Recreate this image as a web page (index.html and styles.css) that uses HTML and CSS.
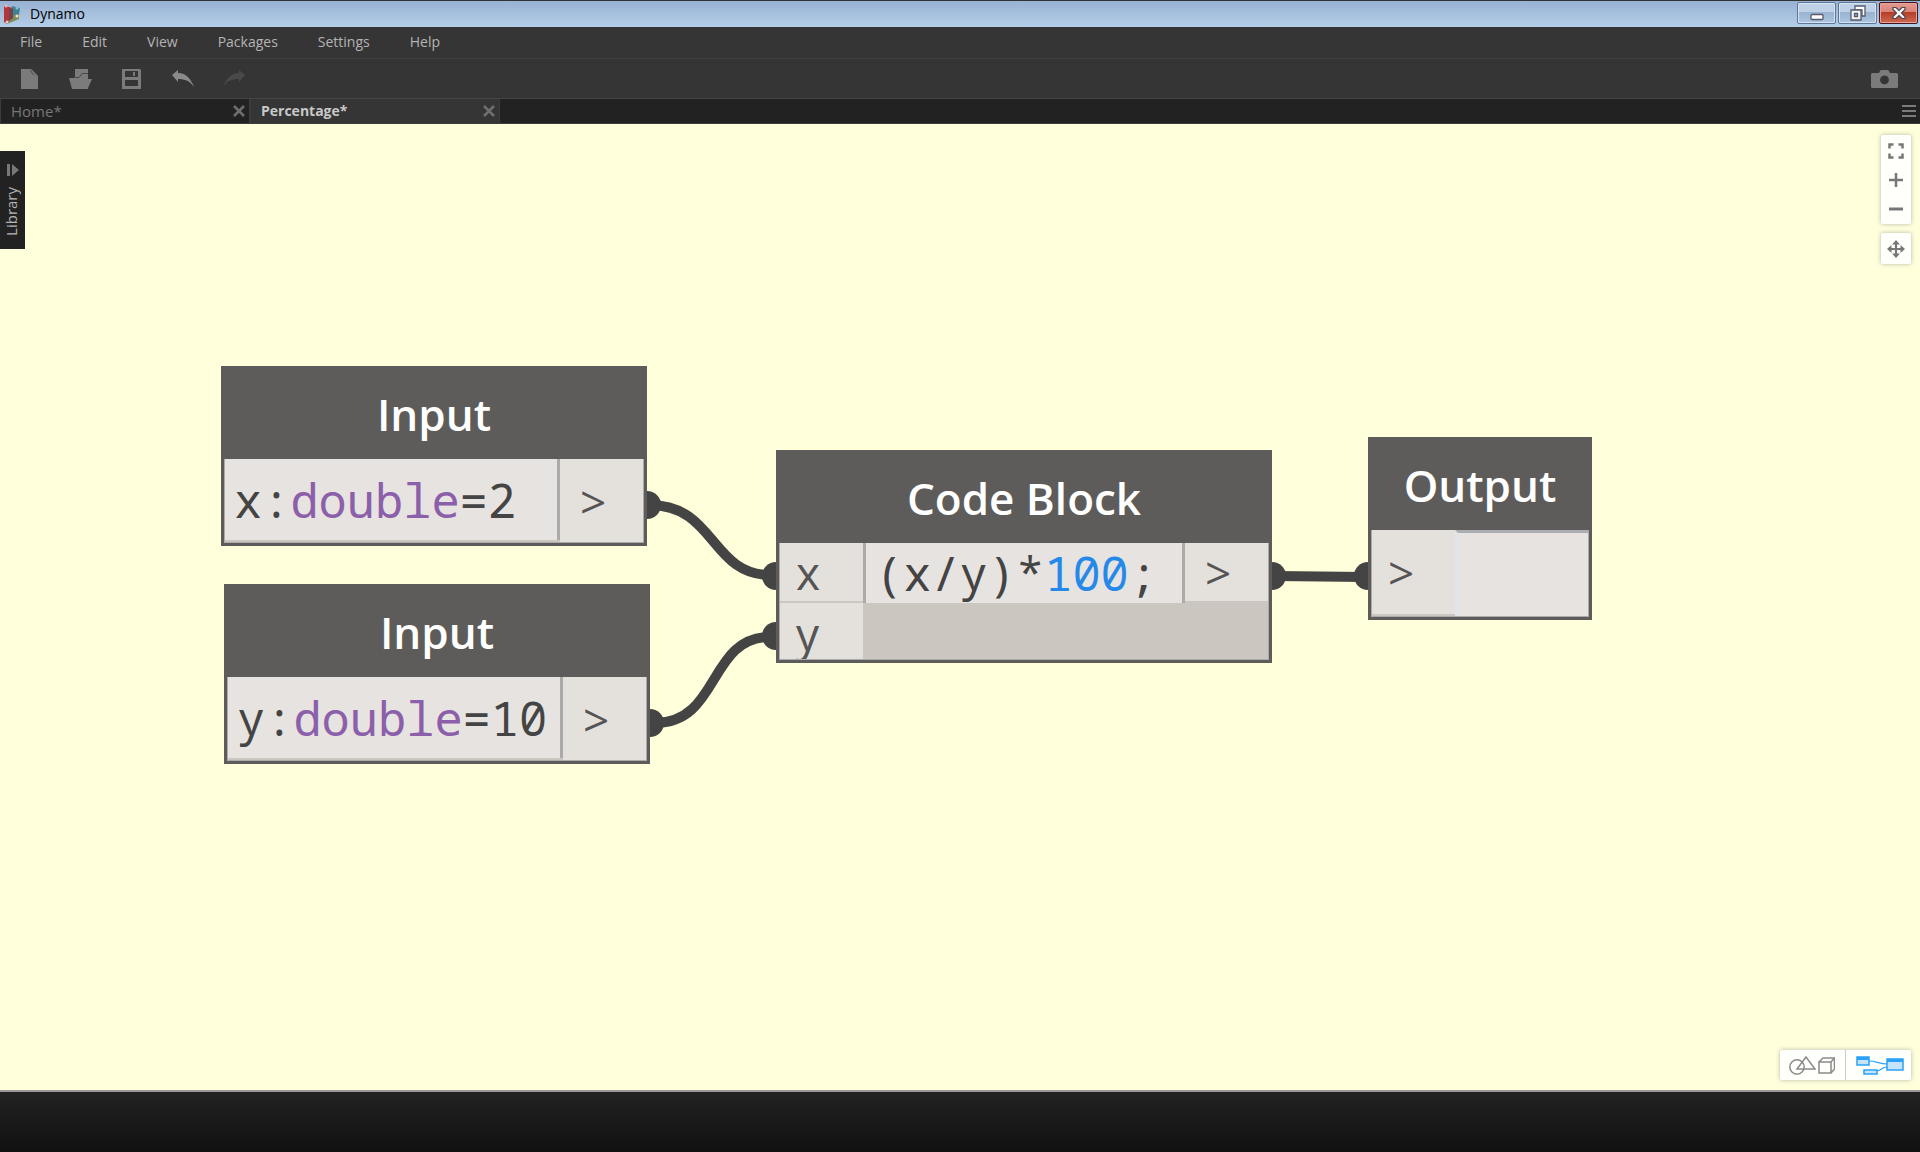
FILE: index.html
```html
<!DOCTYPE html>
<html lang="en">
<head>
<meta charset="utf-8">
<title>Dynamo</title>
<meta name="viewport" content="width=device-width, initial-scale=1">
<link rel="stylesheet" href="styles.css">
</head>
<body>
<header class="titlebar">
  <svg class="app-icon" width="18" height="20" viewBox="0 0 18 20" aria-hidden="true">
    <path d="M1 2l10 2v9l-7 7-3-2z" fill="#b5353c"/>
    <path d="M9 2l8 2-1 7-6 2z" fill="#3f8295"/>
    <path d="M8 12l8-2v5l-12 5z" fill="#7d8c59"/>
    <path d="M6 4l4 1v9l-4 3z" fill="#74424a"/>
    <circle cx="3" cy="2" r="1.500" fill="#e3b3b5"/><circle cx="14" cy="4" r="1.500" fill="#7fc4d8"/><circle cx="14" cy="12" r="1.500" fill="#eee6c4"/><circle cx="4" cy="18" r="1.500" fill="#e8c9cc"/>
  </svg>
  <span class="app-name">Dynamo</span>
  <div class="window-buttons">
    <button class="win-btn" aria-label="Minimize"><svg width="14" height="16" viewBox="0 0 14 16"><rect x="1" y="9.500" width="12" height="5" rx="1" fill="#fff" stroke="#565a6c" stroke-width="1.300"/></svg></button>
    <button class="win-btn" aria-label="Restore"><svg width="16" height="16" viewBox="0 0 16 16"><path d="M5 1h10v10h-3v-6h-7z" fill="#fff" stroke="#565a6c" stroke-width="1.300"/><path fill-rule="evenodd" d="M1 5h10v10H1zM4.500 8.500v3h3v-3z" fill="#f4f4f4" stroke="#565a6c" stroke-width="1.300"/></svg></button>
    <button class="win-btn win-close" aria-label="Close"><svg width="16" height="14" viewBox="0 0 16 14"><path d="M2 1.500h3l3 3 3-3h3v2L10.500 7l3.500 3.500v2h-3l-3-3-3 3H2v-2L5.500 7 2 3.500z" fill="#f6f6f6" stroke="#4c4454" stroke-width="1.200"/></svg></button>
  </div>
</header>

<nav class="menubar" aria-label="Main menu">
  <button>File</button><button>Edit</button><button>View</button><button>Packages</button><button>Settings</button><button>Help</button>
</nav>

<div class="toolbar">
  <button class="tool" aria-label="New"><svg width="18" height="20" viewBox="0 0 18 20"><path d="M0 0h10l7 7v13H0z" fill="#7b7b7b"/><path d="M8 0l9 8c-2-2-4-2.500-5-2z" fill="#4a4a4a"/><path d="M10 0l7 7-5-2z" fill="#7b7b7b"/></svg></button>
  <button class="tool" aria-label="Open"><svg width="24" height="20" viewBox="0 0 24 20"><path d="M6 0h13v9H6z" fill="#7b7b7b"/><path d="M0 9h9l3-4h7v15H3z" fill="#7b7b7b"/><path d="M5 8.500h5l3-4h6" fill="none" stroke="#4a4a4a"/><path d="M18 10h5l-4 9z" fill="#7b7b7b"/></svg></button>
  <button class="tool" aria-label="Save"><svg width="20" height="20" viewBox="0 0 20 20"><path fill-rule="evenodd" d="M0 0h18l1 1v19H0zM3 2v6h13V2zM3 11v6h13v-6z" fill="#7b7b7b"/><path d="M12 3v4" stroke="#7b7b7b" stroke-width="2"/></svg></button>
  <button class="tool" aria-label="Undo"><svg width="22" height="18" viewBox="0 0 22 18"><path d="M6 0v3c8 0 13 6 16 14-4-6-9-8-16-8v3L0 5z" fill="#8a8a8a"/></svg></button>
  <button class="tool" aria-label="Redo" disabled><svg width="22" height="18" viewBox="0 0 22 18"><path d="M16 0v3C8 3 3 9 0 17c4-6 9-8 16-8v3l6-7z" fill="#494949"/></svg></button>
  <button class="tool tool-camera" aria-label="Export image"><svg width="27" height="18" viewBox="0 0 27 18"><path fill-rule="evenodd" d="M1.500 3H8l1-2q.5-1 1.500-1h6q1 0 1.500 1l1 2h6.500q1.500 0 1.500 1.500v12q0 1.500-1.500 1.500h-24Q0 18 0 16.500v-12Q0 3 1.500 3zM13.500 5.500a4.400 4.400 0 1 0 .01 0z" fill="#7b7b7b"/></svg></button>
</div>

<div class="tabs">
  <div class="tab"><a href="#home">Home*</a><button class="tab-close" aria-label="Close Home"><svg width="12" height="12" viewBox="0 0 12 12"><path d="M1 1l10 10M11 1L1 11" stroke="#6e6e6e" stroke-width="2.500"/></svg></button></div>
  <div class="tab active"><a href="#percentage">Percentage*</a><button class="tab-close" aria-label="Close Percentage"><svg width="12" height="12" viewBox="0 0 12 12"><path d="M1 1l10 10M11 1L1 11" stroke="#6e6e6e" stroke-width="2.500"/></svg></button></div>
  <button class="tab-menu" aria-label="Tab list"><svg width="14" height="14" viewBox="0 0 14 14"><path d="M0 2h14M0 7h14M0 12h14" stroke="#7b7b7b" stroke-width="2"/></svg></button>
</div>

<main class="workspace">
  <svg class="wires" aria-hidden="true">
    <g fill="none" stroke="#444" stroke-width="10">
      <path d="M650 381C715 381 711 451 770 451"/>
      <path d="M655 599C720 599 708 513 770 513"/>
      <path d="M1275 452L1365 453"/>
    </g>
    <g fill="#444">
      <circle cx="647" cy="381" r="14"/><circle cx="650" cy="599" r="14"/>
      <circle cx="776" cy="452" r="14"/><circle cx="776" cy="512" r="14"/>
      <circle cx="1272" cy="452" r="14"/><circle cx="1368" cy="452" r="14"/>
    </g>
  </svg>

  <section class="node node-input-x">
    <h2>Input</h2>
    <div class="node-body">
      <code class="code">x:<span class="type">double</span>=2</code>
      <div class="port port-out">&gt;</div>
    </div>
  </section>
  <section class="node node-input-y">
    <h2>Input</h2>
    <div class="node-body">
      <code class="code">y:<span class="type">double</span>=10</code>
      <div class="port port-out">&gt;</div>
    </div>
  </section>
  <section class="node node-code">
    <h2>Code Block</h2>
    <div class="node-body">
      <div class="inputs"><div class="port">x</div><div class="port">y</div></div>
      <code class="code">(x/y)*<span class="number">100</span>;</code>
      <div class="port port-out">&gt;</div>
    </div>
  </section>
  <section class="node node-output">
    <h2>Output</h2>
    <div class="node-body">
      <div class="port">&gt;</div>
      <input class="result" type="text" aria-label="Output value" readonly>
    </div>
  </section>

  <button class="library"><svg width="12" height="12" viewBox="0 0 12 12"><path d="M0 0h3v12H0zM5 0l7 6-7 6z" fill="#777"/></svg><span>Library</span></button>

  <div class="view-tools">
    <div class="panel">
      <button aria-label="Fit view"><svg width="16" height="16" viewBox="0 0 16 16"><path d="M1.500 5.500v-4h4M10.500 1.500h4v4M14.500 10.500v4h-4M5.500 14.500h-4v-4" fill="none" stroke="#777" stroke-width="2.500"/></svg></button>
      <button aria-label="Zoom in"><svg width="14" height="14" viewBox="0 0 14 14"><path d="M7 0v14M0 7h14" stroke="#777" stroke-width="2.500"/></svg></button>
      <button aria-label="Zoom out"><svg width="14" height="14" viewBox="0 0 14 14"><path d="M0 7h14" stroke="#777" stroke-width="3"/></svg></button>
    </div>
    <div class="panel">
      <button aria-label="Pan"><svg width="18" height="18" viewBox="0 0 18 18"><path d="M9 2v14M2 9h14" stroke="#777" stroke-width="2.200"/><path d="M9 0l4 4.500H5zM9 18l4-4.500H5zM0 9l4.500-4v8zM18 9l-4.500-4v8z" fill="#777"/></svg></button>
    </div>
  </div>

  <div class="mode-switch">
    <button aria-label="Geometry view"><svg width="46" height="20" viewBox="0 0 46 20"><g fill="none" stroke="#8a8a8a" stroke-width="1.500"><circle cx="8" cy="12" r="7.200"/><path d="M17 2L8 14h18zM30 7h12v11H30zM30 7l4-4h11.500v11L42 18M42 7l3.500-4"/></g></svg></button>
    <button aria-label="Graph view"><svg width="48" height="20" viewBox="0 0 48 20"><g fill="#c5e4fb" stroke="#2ba1f5" stroke-width="1.500"><path d="M13 6c6 0 11 3 18 3M20 16c6 0 5-4 11-4" fill="none" stroke-width="1.200"/><path d="M1 2h12v8H1zM31 4h16v11H31zM8 15h13v4H8z"/></g><path d="M1 2h12v3H1zM31 4h16v3H31z" fill="#2ba1f5"/></svg></button>
  </div>
</main>
<footer class="footer"></footer>
</body>
</html>
```
FILE: styles.css
```css
* { box-sizing: border-box; }

body {
  margin: 0;
  height: 100vh;
  display: flex;
  flex-direction: column;
  overflow: hidden;
  font: 14px/20px "Open Sans", "Noto Sans", sans-serif;
  color: #b4b4b4;
  background: #333;
}

button {
  margin: 0;
  padding: 0;
  border: 0;
  background: none;
  font: inherit;
  color: inherit;
}

svg { display: block; }

/* Window title */
.titlebar {
  display: flex;
  align-items: center;
  height: 27px;
  padding-left: 3px;
  border-top: 1px solid #333;
  background: linear-gradient(#97b2d2, #b5cee8);
  color: #000;
}
.app-name { margin-left: 9px; }
.window-buttons {
  display: flex;
  gap: 2px;
  align-self: flex-start;
  margin: 1px 2px 0 auto;
}
.win-btn {
  display: grid;
  place-items: center;
  width: 39px;
  height: 22px;
  border: 1px solid #5f7698;
  border-radius: 2px;
  box-shadow: inset 0 0 0 1px #d5e3f2;
  background: linear-gradient(#bfd1e6 0 45%, #98b2d0 45%, #acc5e0);
}
.win-close {
  border-color: #4b1322;
  box-shadow: inset 0 0 0 1px #e4a59b;
  background: linear-gradient(#e39a91, #d98378 45%, #b63b25 45%, #cc6a50);
}

/* Menus and tools */
.menubar {
  display: flex;
  gap: 40px;
  height: 32px;
  padding: 0 20px 2px;
  border-bottom: 1px solid #414141;
  background: #353535;
}
.toolbar {
  display: flex;
  height: 39px;
  padding: 0 22px 0 4px;
  background: #353535;
}
.tool {
  display: grid;
  place-items: center;
  width: 51px;
}
.tool-camera { width: 27px; margin-left: auto; }

/* Workspace tabs */
.tabs {
  display: flex;
  height: 26px;
  border-top: 1px solid #444;
  border-bottom: 1px solid #3c3c3c;
  background: #222;
}
.tab {
  display: flex;
  align-items: center;
  justify-content: space-between;
  width: 250px;
  padding: 0 4px 0 10px;
  border: solid #3c3c3c;
  border-width: 0 1px;
  font-size: 15px;
  color: #777;
}
.tab a { color: inherit; text-decoration: none; }
.tab.active { background: #353535; font-size: 14px; font-weight: 700; color: #c8c8c8; }
.tab-menu { margin: 0 4px 0 auto; }

/* Graph canvas */
.workspace {
  position: relative;
  flex: 1;
  overflow: hidden;
  background: #ffffdc;
}
.wires { position: absolute; inset: 0; width: 100%; height: 100%; }

.node {
  position: absolute;
  border: 3px solid #5e5c5a;
  background: #5e5c5a;
}
.node h2 {
  margin: 0;
  height: 90px;
  font-size: 44px;
  line-height: 90px;
  font-weight: 600;
  text-align: center;
  color: #fff;
}
.node-body {
  display: flex;
  border: solid #aaa;
  border-width: 0 1px 1px;
  background: #cbc6bf;
}
.node-input-x { left: 221px; top: 242px; width: 426px; }
.node-input-y { left: 224px; top: 460px; width: 426px; }
.node-code { left: 776px; top: 326px; width: 496px; }
.node-output { left: 1368px; top: 313px; width: 224px; }

.code {
  flex: 1;
  height: 81px;
  padding-left: 9px;
  border-right: 3px solid #aaa;
  background: #e7e3e0;
  font: 47px/82px "Droid Sans Mono", "Noto Sans Mono", "DejaVu Sans Mono", monospace;
  white-space: pre;
  color: #444;
}
.type { color: #8c5faa; }
.number { color: #2489e8; }
.port {
  width: 83px;
  height: 83px;
  padding-left: 16px;
  background: #e4e1dc;
  font-size: 46px;
  line-height: 84px;
  color: #555;
}
.port-out { padding-left: 20px; }

.node-code .inputs { display: grid; gap: 2px; }
.node-code .port { height: 58px; line-height: 58px; }
.node-code .port + .port { height: 56px; line-height: 60px; overflow: hidden; }
.node-code .code { height: 60px; line-height: 60px; border-left: 3px solid #aaa; }

.node-output .port { height: 84px; }
.result {
  flex: 1;
  min-width: 0;
  height: 86px;
  border: solid #e0e4ec;
  border-width: 3px 0 0 3px;
  border-top-color: #abadb3;
  background: #e7e3e0;
}

/* Overlays */
.library {
  position: absolute;
  left: 0;
  top: 27px;
  display: flex;
  flex-direction: column;
  align-items: center;
  gap: 11px;
  width: 25px;
  height: 98px;
  padding-top: 13px;
  background: #222;
}
.library span {
  padding-left: 3px;
  writing-mode: vertical-rl;
  transform: rotate(180deg);
  font-size: 15px;
}

.view-tools {
  position: absolute;
  right: 9px;
  top: 11px;
  display: grid;
  gap: 9px;
}
.panel, .mode-switch {
  border-radius: 2px;
  background: #fffffb;
  box-shadow: 0 0 4px #999b;
}
.panel { padding: 1px 0; }
.panel button { display: grid; place-items: center; width: 30px; height: 29px; }

.mode-switch {
  position: absolute;
  right: 9px;
  bottom: 10px;
  display: flex;
}
.mode-switch button { display: grid; place-items: center; width: 65px; height: 30px; }
.mode-switch button:first-child { padding-right: 2px; }
.mode-switch button + button { width: 66px; padding-left: 3px; border-left: 1px solid #ccc; }

.footer {
  height: 62px;
  border-top: 2px solid #999;
  background: linear-gradient(#222, #111);
}
```
